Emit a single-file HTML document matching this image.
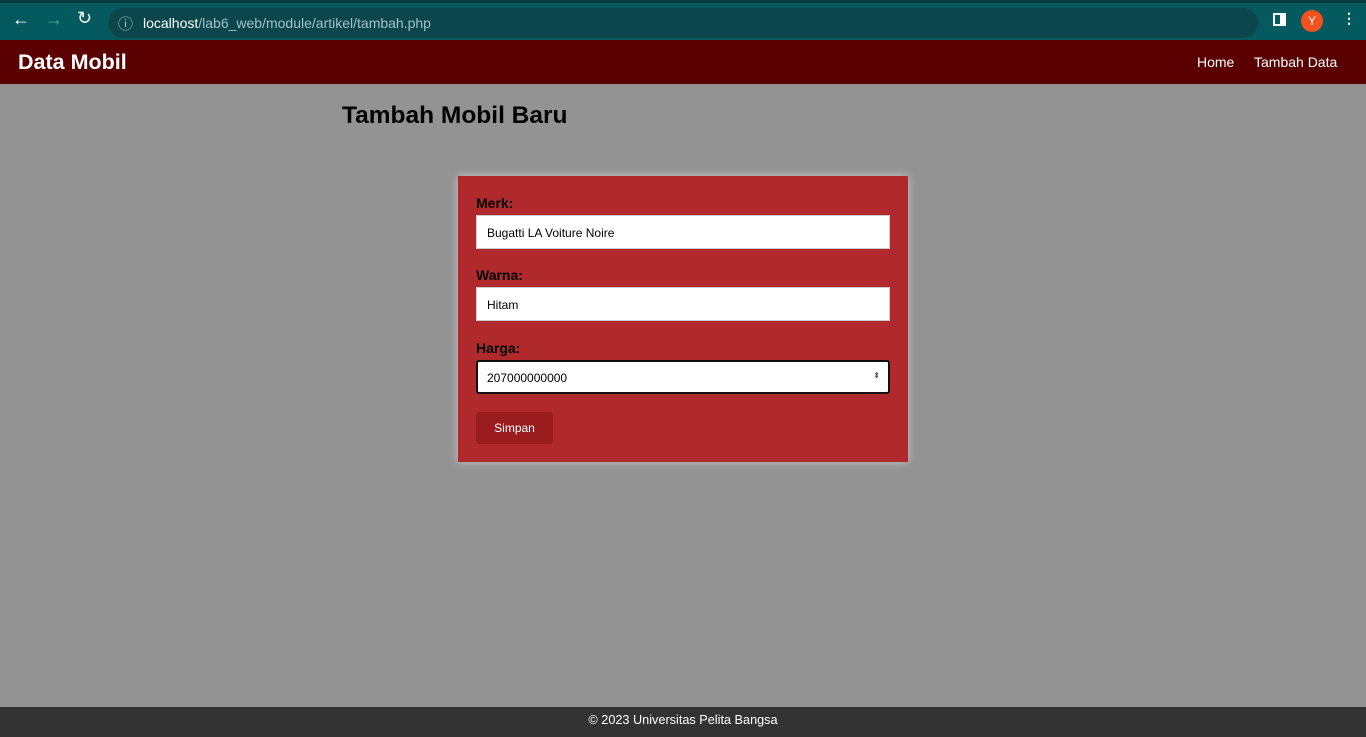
<!DOCTYPE html>
<html><head><style>
*{margin:0;padding:0;box-sizing:border-box}
body{width:1366px;height:737px;background:#939393;font-family:"Liberation Sans",Arial,sans-serif;position:relative;overflow:hidden}
.chrome{position:absolute;left:0;top:0;width:1366px;height:40px;background:#055a60;border-top:3px solid #033b40}
.url{position:absolute;left:108px;top:5px;width:1150px;height:30px;border-radius:15px;background:#0b464c}
.url span{position:absolute;left:35px;top:7px;font-size:14px;color:#9fc3c5}
.url b{font-weight:normal;color:#fff}
.nav{position:absolute;top:40px;left:0;width:1366px;height:44px;background:#5a0000;color:#fff}
.nav h1{position:absolute;left:18px;top:10px;font-size:21.5px}
.nav a{position:absolute;top:14px;font-size:14px;color:#fff}
h2{position:absolute;left:342px;top:102px;font-size:24.5px;color:#000}
.card{position:absolute;left:458px;top:176px;width:450px;height:286px;background:#b0292c;box-shadow:0 0 8px rgba(255,255,255,.5)}
label{position:absolute;left:18px;font-weight:bold;font-size:14px;color:#000}
.in{position:absolute;left:18px;width:414px;height:34px;background:#fff;border:1px solid #ccc;font-size:12px;padding:10px}
.btn{position:absolute;left:18px;top:236px;width:77px;height:32px;background:#9a1c1e;border-radius:3px;color:#fff;font-size:12px;text-align:center;line-height:32px}
.foot{position:absolute;left:0;top:707px;width:1366px;height:30px;background:#333;color:#fff;font-size:12.7px;text-align:center;line-height:27px}
</style></head><body>
<div class="chrome">
<span style="position:absolute;left:12px;top:6px;color:#fff;font-size:18px">←</span>
<span style="position:absolute;left:45px;top:6px;color:#8fb;opacity:.5;font-size:18px">→</span>
<span style="position:absolute;left:77px;top:5px;color:#fff;font-size:18px">↻</span>
<div class="url"><span style="left:10px;top:5px;font-size:15px">ⓘ</span><span><b>localhost</b>/lab6_web/module/artikel/tambah.php</span></div>
<div style="position:absolute;left:1273px;top:10px;width:13px;height:13px;border:2px solid #fff;border-right-width:6px"></div>
<div style="position:absolute;left:1301px;top:7px;width:22px;height:22px;border-radius:50%;background:#f4511e;color:#fff;font-size:12px;text-align:center;line-height:22px">Y</div>
<div style="position:absolute;left:1342px;top:7px;color:#fff;font-size:14px;font-weight:bold">⋮</div>
</div>
<div class="nav"><h1>Data Mobil</h1><a style="left:1197px">Home</a><a style="left:1254px">Tambah Data</a></div>
<h2>Tambah Mobil Baru</h2>
<div class="card">
<label style="top:19px">Merk:</label><div class="in" style="top:39px">Bugatti LA Voiture Noire</div>
<label style="top:91px">Warna:</label><div class="in" style="top:111px">Hitam</div>
<label style="top:164px">Harga:</label><div class="in" style="top:184px;border:2px solid #111;border-radius:3px;padding:9px">207000000000<span style="position:absolute;right:8px;top:9px;font-size:8px;color:#555">⬍</span></div>
<div class="btn">Simpan</div>
</div>
<div class="foot">© 2023 Universitas Pelita Bangsa</div>
</body></html>
